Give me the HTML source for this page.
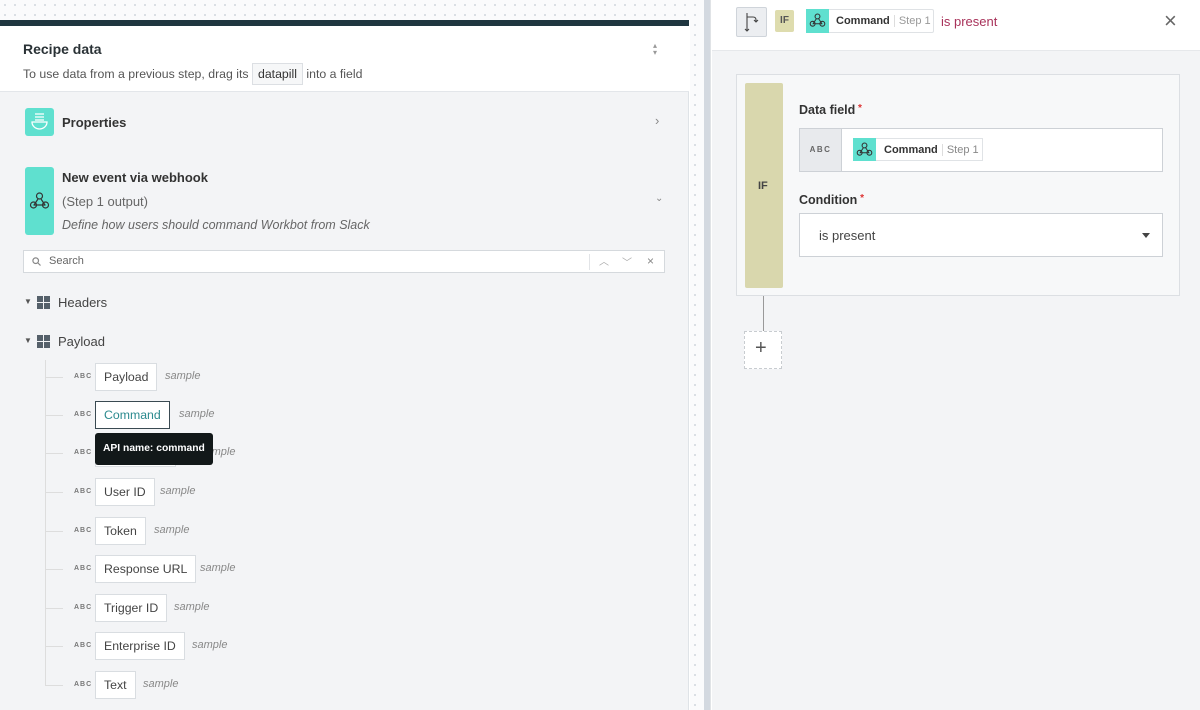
<!DOCTYPE html>
<html><head><meta charset="utf-8">
<style>
*{box-sizing:border-box;margin:0;padding:0}
body{width:1200px;height:710px;overflow:hidden;position:relative;font-family:"Liberation Sans",sans-serif;background:#fff;color:#333}
.abs{position:absolute}
.dots{background-color:#fafbfc;background-image:radial-gradient(#d8dde2 1px,transparent 1.2px);background-size:10px 10px}
.pill{position:absolute;left:95px;height:28px;background:#fff;border:1px solid #d9dde1;font-size:12.3px;line-height:26px;padding:0 8px;color:#444;white-space:nowrap}
.abc{position:absolute;left:74px;font-size:7px;letter-spacing:1px;color:#777;font-weight:bold}
.smp{position:absolute;font-size:11px;font-style:italic;color:#888}
.tick{position:absolute;left:45px;width:18px;height:1px;background:#ddd}
.teal{background:#5fe0cf}
</style></head><body>
<div class="abs dots" style="left:0;top:0;width:1200px;height:20px"></div>
<!-- left panel -->
<div class="abs" style="left:0;top:20px;width:689px;height:690px;background:#f3f4f6;border-right:1px solid #dfe3e7"></div>
<div class="abs" style="left:0;top:20px;width:689px;height:6px;background:#1f3640"></div>
<div class="abs" style="left:0;top:26px;width:689px;height:66px;background:#fff;border-bottom:1px solid #e3e6ea"></div>
<div class="abs" style="left:23px;top:41px;font-size:14px;font-weight:bold;color:#2a3236">Recipe data</div>
<div class="abs" style="left:23px;top:63px;font-size:12.3px;color:#555">To use data from a previous step, drag its <span style="display:inline-block;border:1px solid #dcdfe3;background:#f6f7f8;padding:1px 5px;color:#333;line-height:18px">datapill</span> into a field</div>
<div class="abs" style="left:653px;top:42px;font-size:8px;color:#999;line-height:7px">▴<br>▾</div>

<div class="abs teal" style="left:25px;top:108px;width:29px;height:28px;border-radius:3px"></div>
<svg class="abs" style="left:30px;top:112px" width="19" height="20" viewBox="0 0 19 20" fill="none" stroke="#fff" stroke-width="1.3"><path d="M5 2h9M5 5h9M5 8h9"/><path d="M2 10h15a7.5 7 0 0 1-15 0z"/></svg>
<div class="abs" style="left:62px;top:115px;font-size:13px;font-weight:bold;color:#333">Properties</div>
<div class="abs" style="left:655px;top:113px;font-size:13px;color:#888">›</div>

<div class="abs teal" style="left:25px;top:167px;width:29px;height:68px;border-radius:3px"></div>
<svg class="abs" style="left:29px;top:191px" width="21" height="20" viewBox="0 0 21 20" fill="none" stroke="#333" stroke-width="1.2"><circle cx="10.5" cy="5" r="3"/><circle cx="4.5" cy="14" r="3"/><circle cx="16.5" cy="14" r="3"/><path d="M9 8l-4 6M4.5 14h12M12 8l4 6"/></svg>
<div class="abs" style="left:62px;top:170px;font-size:13px;font-weight:bold;color:#333">New event via webhook</div>
<div class="abs" style="left:62px;top:194px;font-size:13px;color:#666">(Step 1 output)</div>
<div class="abs" style="left:62px;top:218px;font-size:12.5px;font-style:italic;color:#666">Define how users should command Workbot from Slack</div>
<div class="abs" style="left:655px;top:193px;font-size:10px;color:#888">⌄</div>

<div class="abs" style="left:23px;top:250px;width:642px;height:23px;background:#fff;border:1px solid #d5d9dd"></div>
<svg class="abs" style="left:32px;top:257px" width="9" height="9" viewBox="0 0 9 9" fill="none" stroke="#888" stroke-width="1.2"><circle cx="3.7" cy="3.7" r="2.8"/><path d="M6 6l2.5 2.5"/></svg>
<div class="abs" style="left:49px;top:255px;font-size:11px;color:#666">Search</div>
<div class="abs" style="left:589px;top:254px;width:1px;height:16px;background:#e2e4e7"></div>
<div class="abs" style="left:599px;top:253px;font-size:10px;color:#aaa">︿</div>
<div class="abs" style="left:622px;top:254px;font-size:10px;color:#aaa">﹀</div>
<div class="abs" style="left:647px;top:254px;font-size:12px;color:#888">×</div>

<div class="abs" style="left:24px;top:297px;font-size:8px;color:#555">▼</div>
<svg class="abs" style="left:37px;top:296px" width="13" height="13"><rect x="0" y="0" width="6" height="6" fill="#55606a"/><rect x="7" y="0" width="6" height="6" fill="#55606a"/><rect x="0" y="7" width="6" height="6" fill="#55606a"/><rect x="7" y="7" width="6" height="6" fill="#55606a"/></svg>
<div class="abs" style="left:58px;top:295px;font-size:13px;color:#444">Headers</div>
<div class="abs" style="left:24px;top:336px;font-size:8px;color:#555">▼</div>
<svg class="abs" style="left:37px;top:335px" width="13" height="13"><rect x="0" y="0" width="6" height="6" fill="#55606a"/><rect x="7" y="0" width="6" height="6" fill="#55606a"/><rect x="0" y="7" width="6" height="6" fill="#55606a"/><rect x="7" y="7" width="6" height="6" fill="#55606a"/></svg>
<div class="abs" style="left:58px;top:334px;font-size:13px;color:#444">Payload</div>
<div class="abs" style="left:45px;top:360px;width:1px;height:325px;background:#ddd"></div>

<div class="tick" style="top:377px"></div><div class="abc" style="top:373px">ABC</div><div class="pill" style="top:363px">Payload</div><div class="smp" style="left:165px;top:370px">sample</div>
<div class="tick" style="top:415px"></div><div class="abc" style="top:411px">ABC</div><div class="pill" style="top:401px;border-color:#3a4a52;color:#2b8a8e">Command</div><div class="smp" style="left:179px;top:408px">sample</div>
<div class="tick" style="top:453px"></div><div class="abc" style="top:449px">ABC</div><div class="pill" style="top:439px;width:81px"></div><div class="smp" style="left:200px;top:446px">sample</div>
<div class="tick" style="top:492px"></div><div class="abc" style="top:488px">ABC</div><div class="pill" style="top:478px">User ID</div><div class="smp" style="left:160px;top:485px">sample</div>
<div class="tick" style="top:531px"></div><div class="abc" style="top:527px">ABC</div><div class="pill" style="top:517px">Token</div><div class="smp" style="left:154px;top:524px">sample</div>
<div class="tick" style="top:569px"></div><div class="abc" style="top:565px">ABC</div><div class="pill" style="top:555px">Response URL</div><div class="smp" style="left:200px;top:562px">sample</div>
<div class="tick" style="top:608px"></div><div class="abc" style="top:604px">ABC</div><div class="pill" style="top:594px">Trigger ID</div><div class="smp" style="left:174px;top:601px">sample</div>
<div class="tick" style="top:646px"></div><div class="abc" style="top:642px">ABC</div><div class="pill" style="top:632px">Enterprise ID</div><div class="smp" style="left:192px;top:639px">sample</div>
<div class="tick" style="top:685px"></div><div class="abc" style="top:681px">ABC</div><div class="pill" style="top:671px">Text</div><div class="smp" style="left:143px;top:678px">sample</div>

<div class="abs" style="left:95px;top:433px;width:118px;height:32px;background:#121819;border-radius:3px;color:#fff;font-size:10.3px;font-weight:bold;line-height:32px;padding-left:8px;white-space:nowrap">API name: command</div>

<!-- divider -->
<div class="abs dots" style="left:690px;top:0;width:14px;height:710px"></div>
<div class="abs" style="left:704px;top:0;width:6px;height:710px;background:#d3d9e0"></div>
<div class="abs" style="left:710px;top:0;width:2px;height:710px;background:#fff;border-left:1px solid #e0e3e6"></div>

<!-- right panel -->
<div class="abs" style="left:712px;top:0;width:488px;height:710px;background:#f3f4f6"></div>
<div class="abs" style="left:712px;top:0;width:488px;height:51px;background:#fff;border-bottom:1px solid #e6e8eb"></div>
<div class="abs" style="left:736px;top:7px;width:31px;height:30px;background:#eceef1;border:1px solid #cfd4da;border-radius:2px"></div>
<svg class="abs" style="left:743px;top:12px" width="18" height="20" viewBox="0 0 18 20" fill="none" stroke="#444" stroke-width="1.1"><path d="M4 1v18M4 5h6q3 0 3 3v2M11 8l2 2 2-2"/><path d="M2 17l2 2 2-2"/></svg>
<div class="abs" style="left:775px;top:10px;width:19px;height:22px;background:#dedcae;border-radius:2px;font-size:10px;font-weight:bold;color:#555;text-align:center;line-height:22px">IF</div>
<div class="abs" style="left:806px;top:9px;width:128px;height:24px;background:#fff;border:1px solid #dfe2e5;border-radius:2px"></div>
<div class="abs teal" style="left:806px;top:9px;width:23px;height:24px"></div>
<svg class="abs" style="left:809px;top:12px" width="17" height="17" viewBox="0 0 21 20" fill="none" stroke="#333" stroke-width="1.3"><circle cx="10.5" cy="5" r="3"/><circle cx="4.5" cy="14" r="3"/><circle cx="16.5" cy="14" r="3"/><path d="M9 8l-4 6M4.5 14h12M12 8l4 6"/></svg>
<div class="abs" style="left:836px;top:15px;font-size:11px;font-weight:bold;color:#333">Command <span style="font-weight:normal;color:#999;border-left:1px solid #ddd;padding-left:4px;margin-left:1px">Step 1</span></div>
<div class="abs" style="left:941px;top:14px;font-size:13px;color:#a8325a">is present</div>
<div class="abs" style="left:1164px;top:8px;font-size:22px;color:#666;font-weight:lighter">×</div>

<div class="abs" style="left:736px;top:74px;width:444px;height:222px;background:#f7f8f9;border:1px solid #dcdfe3"></div>
<div class="abs" style="left:745px;top:83px;width:38px;height:205px;background:#d9d7ad;border-radius:2px"></div>
<div class="abs" style="left:758px;top:180px;font-size:11px;font-weight:bold;color:#444">IF</div>
<div class="abs" style="left:799px;top:103px;font-size:12.5px;font-weight:bold;color:#333">Data field<span style="color:#d33;font-size:10px;vertical-align:top"> *</span></div>
<div class="abs" style="left:799px;top:128px;width:364px;height:44px;background:#fff;border:1px solid #cdd1d6"></div>
<div class="abs" style="left:800px;top:129px;width:42px;height:42px;background:#e8eaed;border-right:1px solid #cdd1d6;font-size:8px;letter-spacing:1.5px;color:#666;font-weight:bold;text-align:center;line-height:42px">ABC</div>
<div class="abs" style="left:853px;top:138px;width:130px;height:23px;background:#fff;border:1px solid #e0e3e6"></div>
<div class="abs teal" style="left:853px;top:138px;width:23px;height:23px"></div>
<svg class="abs" style="left:856px;top:141px" width="17" height="17" viewBox="0 0 21 20" fill="none" stroke="#333" stroke-width="1.3"><circle cx="10.5" cy="5" r="3"/><circle cx="4.5" cy="14" r="3"/><circle cx="16.5" cy="14" r="3"/><path d="M9 8l-4 6M4.5 14h12M12 8l4 6"/></svg>
<div class="abs" style="left:884px;top:144px;font-size:11px;font-weight:bold;color:#333">Command <span style="font-weight:normal;color:#888;border-left:1px solid #ddd;padding-left:4px;margin-left:1px">Step 1</span></div>
<div class="abs" style="left:799px;top:193px;font-size:12.5px;font-weight:bold;color:#333">Condition<span style="color:#d33;font-size:10px;vertical-align:top"> *</span></div>
<div class="abs" style="left:799px;top:213px;width:364px;height:44px;background:#fff;border:1px solid #cdd1d6"></div>
<div class="abs" style="left:819px;top:228px;font-size:13px;color:#444">is present</div>
<div class="abs" style="left:1142px;top:233px;width:0;height:0;border-left:4px solid transparent;border-right:4px solid transparent;border-top:5px solid #444"></div>
<div class="abs" style="left:763px;top:296px;width:1px;height:35px;background:#999"></div>
<div class="abs" style="left:744px;top:331px;width:38px;height:38px;background:#fff;border:1px dashed #c8ccd0"></div>
<div class="abs" style="left:755px;top:337px;font-size:20px;color:#555;font-weight:lighter">+</div>
</body></html>
